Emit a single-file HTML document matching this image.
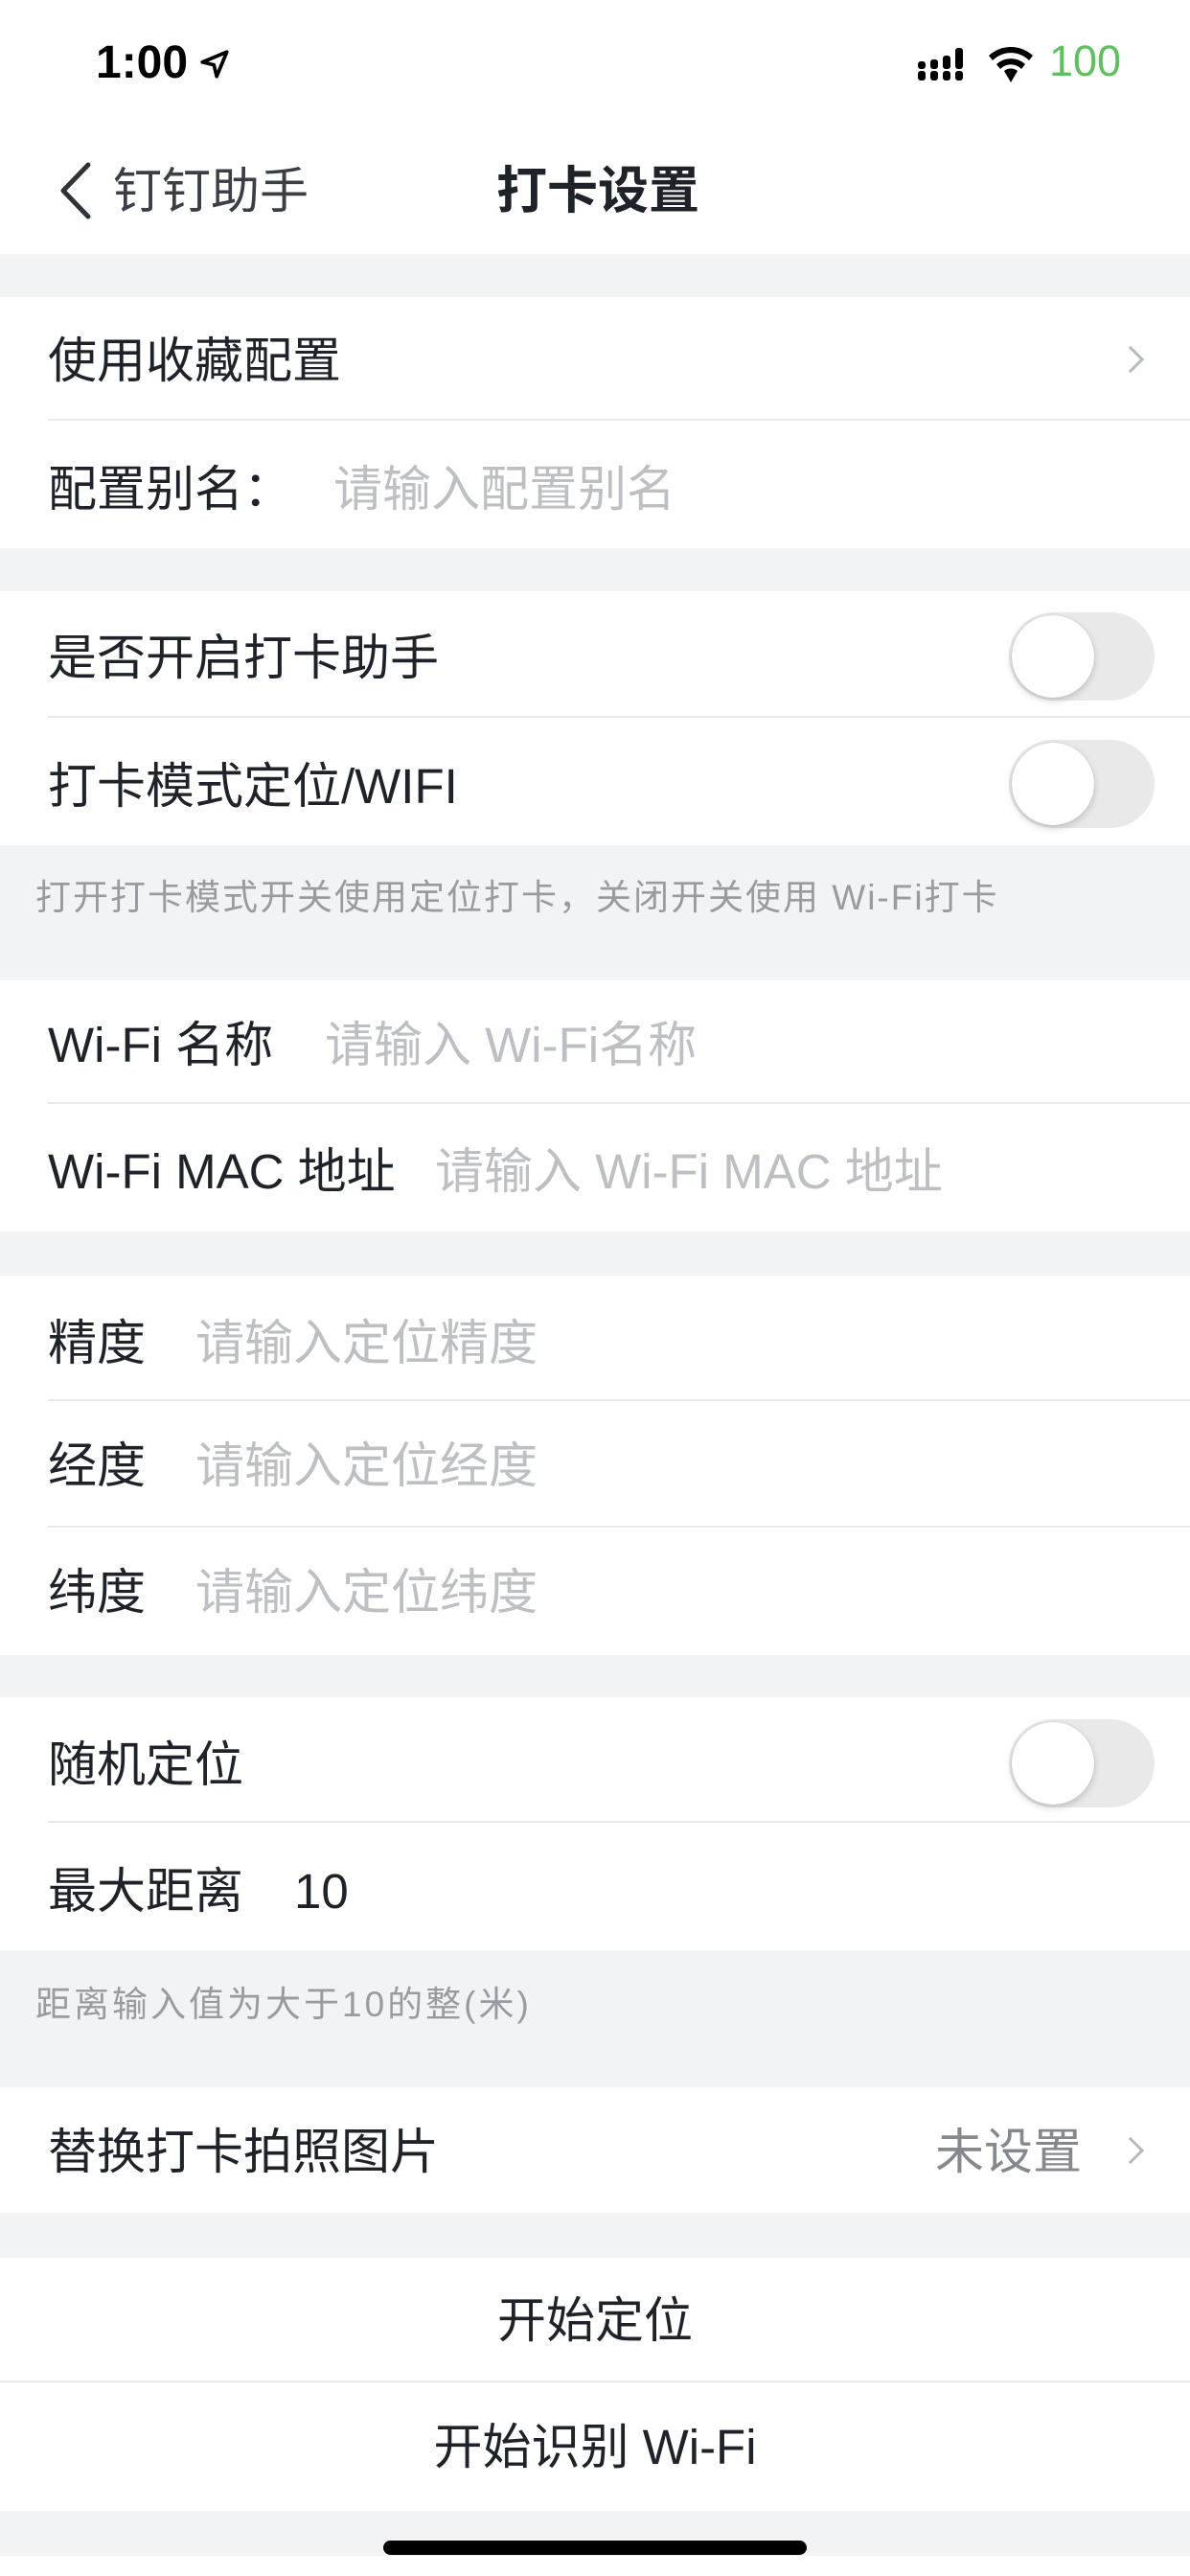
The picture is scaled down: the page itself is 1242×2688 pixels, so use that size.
<!DOCTYPE html>
<html><head><meta charset="utf-8">
<style>
*{margin:0;padding:0;box-sizing:border-box}
body{width:1242px;height:2688px;background:#fff;position:relative;overflow:hidden;font-family:"Liberation Sans","Noto Sans CJK SC",sans-serif;color:#1f2329}
.a{position:absolute}
.g{position:absolute;left:0;width:1242px;background:#f2f3f5}
.t{position:absolute;font-size:51px;line-height:64px;white-space:nowrap}
.ph{color:#bdbfc2}
.div{position:absolute;left:50px;right:0;height:2px;background:#e8e9eb}
.tg{position:absolute;left:1053px;width:152px;height:92px;border-radius:46px;background:#e9e9ea}
.tg::after{content:"";position:absolute;left:3px;top:3px;width:86px;height:86px;border-radius:50%;background:#fff;box-shadow:0 3px 8px rgba(0,0,0,.18),0 0 1px rgba(0,0,0,.2)}
.ft{position:absolute;left:37px;font-size:37px;color:#999ba0;white-space:nowrap;letter-spacing:2px}
.chev{position:absolute;width:20px;height:20px;border-right:3px solid #b8babd;border-top:3px solid #b8babd;transform:rotate(45deg)}
</style></head><body>
<div class="a" style="left:100px;top:38px;font-size:48px;font-weight:bold;color:#000">1:00</div>
<svg class="a" style="left:207px;top:50px" width="34" height="34" viewBox="0 0 24 24"><path d="M21 3L3 10.5l8.5 2 2 8.5z" fill="none" stroke="#000" stroke-width="2.6" stroke-linejoin="round"/></svg>
<svg class="a" style="left:958px;top:50px" width="52" height="36" viewBox="0 0 52 36"><g fill="#000"><rect x="0" y="24" width="8" height="10" rx="3"/><rect x="0" y="14" width="8" height="8" rx="3"/><rect x="13" y="24" width="8" height="10" rx="3"/><rect x="13" y="12" width="8" height="10" rx="3"/><rect x="26" y="24" width="8" height="10" rx="3"/><rect x="26" y="8" width="8" height="14" rx="3"/><rect x="39" y="24" width="8" height="10" rx="3"/><rect x="39" y="0" width="8" height="22" rx="3"/></g></svg>
<svg class="a" style="left:1030px;top:46px" width="50" height="42" viewBox="0 0 50 42"><path d="M25 40L18 28a11 11 0 0 1 14 0z M10 21a22 22 0 0 1 30 0l-4 5a15 15 0 0 0-22 0z M2 12a34 34 0 0 1 46 0l-4 5a27 27 0 0 0-38 0z" fill="#000"/></svg>
<div class="a" style="left:1095px;top:38px;font-size:45px;color:#5cc15c">100</div>

<svg class="a" style="left:58px;top:168px" width="40" height="62" viewBox="0 0 40 62"><path d="M34 4L8 31l26 27" fill="none" stroke="#2f3338" stroke-width="5" stroke-linecap="round" stroke-linejoin="round"/></svg>
<div class="t" style="left:118px;top:168px;color:#3b3f45">钉钉助手</div>
<div class="t" style="left:518px;top:168px;font-weight:bold;font-size:53px">打卡设置</div>

<div class="g" style="top:265px;height:45px"></div>
<div class="t" style="left:50px;top:345px">使用收藏配置</div>
<div class="chev" style="left:1170px;top:365px"></div>
<div class="div" style="top:437px"></div>
<div class="t" style="left:50px;top:479px">配置别名：</div>
<div class="t ph" style="left:348px;top:479px">请输入配置别名</div>

<div class="g" style="top:572px;height:45px"></div>
<div class="t" style="left:50px;top:655px">是否开启打卡助手</div>
<div class="tg" style="top:639px"></div>
<div class="div" style="top:747px"></div>
<div class="t" style="left:50px;top:789px">打卡模式定位/WIFI</div>
<div class="tg" style="top:772px"></div>

<div class="g" style="top:882px;height:141px"></div>
<div class="ft" style="top:906px">打开打卡模式开关使用定位打卡，关闭开关使用 Wi-Fi打卡</div>

<div class="t" style="left:50px;top:1059px">Wi-Fi 名称</div>
<div class="t ph" style="left:339px;top:1059px">请输入 Wi-Fi名称</div>
<div class="div" style="top:1150px"></div>
<div class="t" style="left:50px;top:1191px">Wi-Fi MAC 地址</div>
<div class="t ph" style="left:454px;top:1191px">请输入 Wi-Fi MAC 地址</div>

<div class="g" style="top:1285px;height:46px"></div>
<div class="t" style="left:50px;top:1370px">精度</div>
<div class="t ph" style="left:204px;top:1370px">请输入定位精度</div>
<div class="div" style="top:1460px"></div>
<div class="t" style="left:50px;top:1498px">经度</div>
<div class="t ph" style="left:204px;top:1498px">请输入定位经度</div>
<div class="div" style="top:1592px"></div>
<div class="t" style="left:50px;top:1630px">纬度</div>
<div class="t ph" style="left:204px;top:1630px">请输入定位纬度</div>

<div class="g" style="top:1727px;height:44px"></div>
<div class="t" style="left:50px;top:1810px">随机定位</div>
<div class="tg" style="top:1794px"></div>
<div class="div" style="top:1900px"></div>
<div class="t" style="left:50px;top:1942px">最大距离</div>
<div class="t" style="left:307px;top:1942px">10</div>

<div class="g" style="top:2035px;height:143px"></div>
<div class="ft" style="top:2061px;letter-spacing:3px">距离输入值为大于10的整(米)</div>

<div class="t" style="left:50px;top:2214px">替换打卡拍照图片</div>
<div class="t" style="left:976px;top:2214px;color:#85888d">未设置</div>
<div class="chev" style="left:1170px;top:2234px"></div>

<div class="g" style="top:2309px;height:47px"></div>
<div class="t" style="left:0;width:1242px;text-align:center;top:2390px">开始定位</div>
<div class="div" style="top:2484px;left:0"></div>
<div class="t" style="left:0;width:1242px;text-align:center;top:2522px">开始识别 Wi-Fi</div>

<div class="g" style="top:2620px;height:47px"></div>
<div class="a" style="left:400px;top:2651px;width:442px;height:15px;border-radius:8px;background:#000"></div>
</body></html>
